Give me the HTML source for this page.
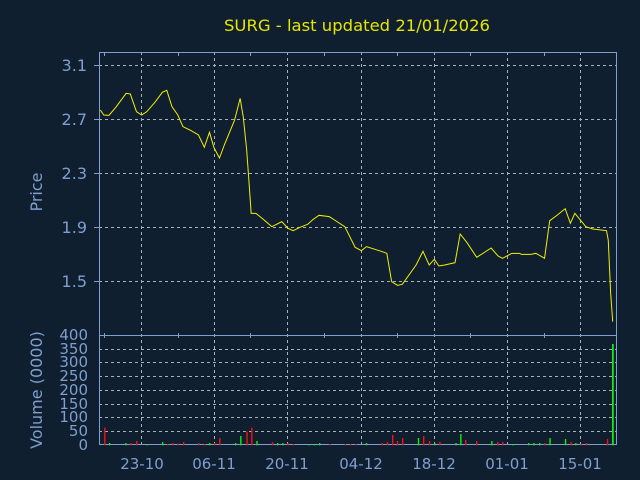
<!DOCTYPE html>
<html><head><meta charset="utf-8"><style>
html,body{margin:0;padding:0;background:#0f1f2f;}
svg{display:block;}
text{font-family:"DejaVu Sans","Liberation Sans",sans-serif;}
</style></head><body>
<svg width="640" height="480" viewBox="0 0 640 480" xmlns="http://www.w3.org/2000/svg">
<rect width="640" height="480" fill="#0f1f2f"/>
<text x="224" y="31" font-size="16" fill="#e6e600" textLength="266" lengthAdjust="spacingAndGlyphs">SURG - last updated 21/01/2026</text>
<g stroke="#a8b0b8" stroke-width="1" stroke-dasharray="3,3" fill="none">
<path d="M99 65.5H617M99 119.5H617M99 173.5H617M99 227.5H617M99 281.5H617"/>
<path d="M99 349.5H617M99 362.5H617M99 376.5H617M99 390.5H617M99 404.5H617M99 417.5H617M99 431.5H617"/>
<path d="M141.5 52V445M214.5 52V445M287.5 52V445M361.5 52V445M434.5 52V445M507.5 52V445M580.5 52V445"/>
</g>
<g stroke="#7f9fcf" stroke-width="1" fill="none">
<rect x="99.5" y="52.5" width="517" height="392"/>
<path d="M99 335.5H617"/>
<path d="M104.5 52V56M178.5 52V56M250.5 52V56M324.5 52V56M397.5 52V56M470.5 52V56M544.5 52V56"/>
<path d="M104.5 333V338M178.5 333V338M250.5 333V338M324.5 333V338M397.5 333V338M470.5 333V338M544.5 333V338"/>
<path d="M94 65.5H99M94 119.5H99M94 173.5H99M94 227.5H99M94 281.5H99"/>
</g>
<g transform="translate(90,50) scale(0.34435,0.33333)">
<polyline fill="none" stroke="#f0f000" stroke-width="1" vector-effect="non-scaling-stroke" points="30,180 40,195 55,196 75,172 105,130 117,132 135,185 150,195 165,185 190,155 210,127 223,121 238,170 255,195 270,230 290,240 315,255 332,292 347,247 360,293 376,324 390,285 420,210 436,145 445,200 455,300 462,400 468,490 482,490 500,505 528,530 557,515 575,535 590,542 610,532 632,523 648,508 665,496 695,500 710,510 740,530 770,592 788,602 803,590 840,602 862,610 876,695 893,706 907,703 947,645 967,604 985,645 1000,628 1013,648 1030,645 1060,638 1075,552 1095,578 1123,622 1165,594 1185,618 1198,625 1225,610 1247,610 1253,613 1280,613 1295,610 1320,625 1335,512 1355,497 1380,476 1395,520 1408,490 1440,530 1460,537 1500,542 1505,570 1512,730 1518,815"/>
</g>
<g transform="translate(90,320) scale(0.34435,0.33333)">
<g fill="#ff1010">
<rect x="41" y="323" width="4" height="53"/><rect x="117" y="369" width="4" height="7"/><rect x="134" y="363" width="4" height="13"/><rect x="224" y="372" width="4" height="4"/><rect x="239" y="369" width="4" height="7"/><rect x="254" y="371" width="4" height="5"/><rect x="270" y="366" width="4" height="10"/><rect x="314" y="369" width="4" height="7"/><rect x="331" y="372" width="4" height="4"/><rect x="360" y="369" width="4" height="7"/><rect x="375" y="354" width="4" height="22"/><rect x="454" y="335" width="4" height="41"/><rect x="468" y="323" width="4" height="53"/><rect x="528" y="366" width="4" height="10"/><rect x="573" y="369" width="4" height="7"/><rect x="589" y="372" width="4" height="4"/><rect x="695" y="372" width="4" height="4"/><rect x="740" y="372" width="4" height="4"/><rect x="755" y="372" width="4" height="4"/><rect x="770" y="372" width="4" height="4"/><rect x="847" y="369" width="4" height="7"/><rect x="862" y="366" width="4" height="10"/><rect x="877" y="345" width="4" height="31"/><rect x="891" y="363" width="4" height="13"/><rect x="906" y="354" width="4" height="22"/><rect x="967" y="348" width="4" height="28"/><rect x="984" y="363" width="4" height="13"/><rect x="1014" y="366" width="4" height="10"/><rect x="1089" y="360" width="4" height="16"/><rect x="1121" y="363" width="4" height="13"/><rect x="1182" y="366" width="4" height="10"/><rect x="1197" y="366" width="4" height="10"/><rect x="1319" y="369" width="4" height="7"/><rect x="1395" y="366" width="4" height="10"/><rect x="1424" y="372" width="4" height="4"/><rect x="1440" y="369" width="4" height="7"/><rect x="1501" y="357" width="4" height="19"/>
</g>
<g fill="#10f010">
<rect x="55" y="369" width="4" height="7"/><rect x="102" y="369" width="4" height="7"/><rect x="164" y="372" width="4" height="4"/><rect x="209" y="366" width="4" height="10"/><rect x="346" y="369" width="4" height="7"/><rect x="421" y="369" width="4" height="7"/><rect x="436" y="348" width="4" height="28"/><rect x="483" y="363" width="4" height="13"/><rect x="543" y="369" width="4" height="7"/><rect x="558" y="369" width="4" height="7"/><rect x="634" y="372" width="4" height="4"/><rect x="650" y="372" width="4" height="4"/><rect x="665" y="369" width="4" height="7"/><rect x="801" y="369" width="4" height="7"/><rect x="952" y="354" width="4" height="22"/><rect x="999" y="369" width="4" height="7"/><rect x="1061" y="369" width="4" height="7"/><rect x="1075" y="342" width="4" height="34"/><rect x="1165" y="363" width="4" height="13"/><rect x="1226" y="372" width="4" height="4"/><rect x="1272" y="369" width="4" height="7"/><rect x="1287" y="369" width="4" height="7"/><rect x="1304" y="369" width="4" height="7"/><rect x="1334" y="354" width="4" height="22"/><rect x="1379" y="357" width="4" height="19"/><rect x="1409" y="369" width="4" height="7"/><rect x="1516" y="72" width="5" height="304"/>
</g>
</g>
<g fill="#7f9fcf" font-size="16" text-anchor="end">
<text x="87" y="71">3.1</text><text x="87" y="125">2.7</text><text x="87" y="179">2.3</text><text x="87" y="233">1.9</text><text x="87" y="287">1.5</text>
</g>
<g fill="#7f9fcf" font-size="15" text-anchor="end">
<text x="88" y="340">400</text><text x="88" y="354">350</text><text x="88" y="367">300</text><text x="88" y="381">250</text><text x="88" y="395">200</text><text x="88" y="409">150</text><text x="88" y="422">100</text><text x="88" y="436">50</text><text x="88" y="450">0</text>
</g>
<g fill="#7f9fcf" font-size="15" text-anchor="middle">
<text x="142" y="469">23-10</text><text x="214" y="469">06-11</text><text x="287" y="469">20-11</text><text x="361" y="469">04-12</text><text x="434" y="469">18-12</text><text x="507" y="469">01-01</text><text x="580" y="469">15-01</text>
</g>
<text transform="translate(42,192) rotate(-90)" fill="#7f9fcf" font-size="16" text-anchor="middle">Price</text>
<text transform="translate(42,390) rotate(-90)" fill="#7f9fcf" font-size="16" text-anchor="middle">Volume (0000)</text>
</svg>
</body></html>
